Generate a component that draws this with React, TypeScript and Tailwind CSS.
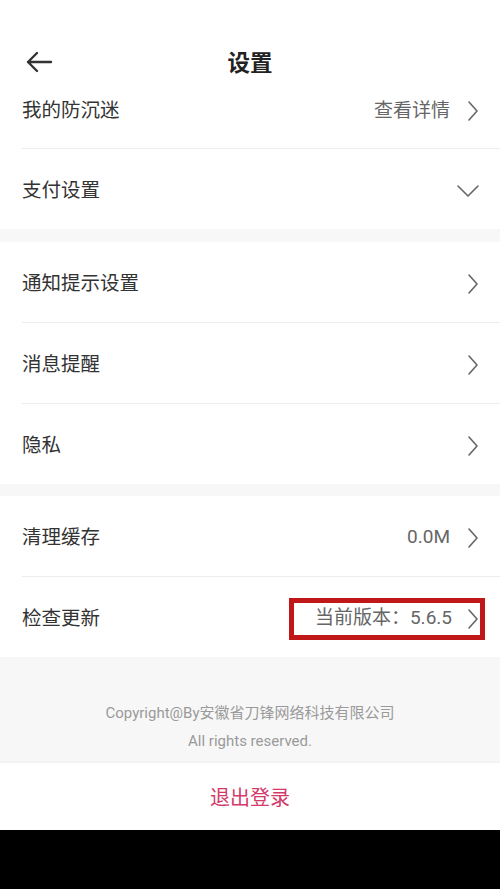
import type { ReactNode } from "react";

// Settings screen — grouped rows, copyright footer, logout bar.

const FONT = "font-['Roboto','Noto_Sans_CJK_SC',sans-serif]";

function ChevronRight() {
  return (
    <svg width="14" height="22" viewBox="0 0 14 22" fill="none" className="shrink-0">
      <path d="M3 2l8 9-8 9" stroke="#666" strokeWidth="1.6" strokeLinecap="round" strokeLinejoin="round" />
    </svg>
  );
}

function ChevronDown() {
  return (
    <svg width="24" height="14" viewBox="0 0 24 14" fill="none" className="shrink-0">
      <path d="M2 2l10 10 10-10" stroke="#666" strokeWidth="1.6" strokeLinecap="round" strokeLinejoin="round" />
    </svg>
  );
}

type RowProps = {
  label: string;
  right?: ReactNode;
  divider?: boolean;
  className?: string;
};

function Row({ label, right, divider = false, className = "h-[80px] pt-[3px]" }: RowProps) {
  return (
    <div className={`ml-[22px] flex items-center justify-between pr-[20px] ${className} ${divider ? "border-b border-[#ececec]" : ""}`}>
      <span className="text-[19.5px] text-[#333333]">{label}</span>
      {right ?? <ChevronRight />}
    </div>
  );
}

function Value({ children }: { children: ReactNode }) {
  return (
    <div className="flex items-center gap-[16px]">
      <span className="text-[19px] text-[#666666]">{children}</span>
      <ChevronRight />
    </div>
  );
}

export default function App() {
  return (
    <div className={`flex h-[889px] w-[500px] flex-col bg-[#f7f7f7] ${FONT}`}>
      {/* status bar + title */}
      <div className="bg-white">
        <div className="h-[30px]" />
        <div className="relative flex h-[58px] items-center justify-center pt-[10px]">
          <svg width="28" height="22" viewBox="0 0 28 22" fill="none" className="absolute left-[25px] top-[21px]">
            <path d="M26 11H3M12 2L3 11l9 9" stroke="#333" strokeWidth="2.4" strokeLinecap="round" strokeLinejoin="round" />
          </svg>
          <span className="text-[22.5px] font-bold text-[#222]">设置</span>
        </div>
      </div>

      <div className="bg-white">
        <Row
          label="我的防沉迷"
          divider
          className="h-[61px] pb-[14px]"
          right={<Value>查看详情</Value>}
        />
        <Row label="支付设置" className="h-[80px] pt-[3px]" right={<ChevronDown />} />
      </div>

      <div className="mt-[13px] bg-white">
        <Row label="通知提示设置" divider className="h-[81px] pt-[3px]" />
        <Row label="消息提醒" divider className="h-[81px] pt-[3px]" />
        <Row label="隐私" className="h-[80px] pt-[3px]" />
      </div>

      <div className="mt-[12px] bg-white">
        <Row label="清理缓存" divider className="h-[81px] pt-[3px]" right={<Value>0.0M</Value>} />
        <Row
          label="检查更新"
          className="h-[80px] pt-[3px]"
          right={
            <div className="mr-[-5px] flex h-[42px] w-[196px] items-center justify-end gap-[14px] border-[5px] border-[#c01818] pr-[0px]">
              <span className="text-[19px] text-[#666666]">当前版本：5.6.5</span>
              <ChevronRight />
            </div>
          }
        />
      </div>

      {/* footer */}
      <div className="flex h-[106px] flex-col items-center pt-[42px] text-[15px] leading-[28px] text-[#9a9a9a]">
        <span>Copyright@By安徽省刀锋网络科技有限公司</span>
        <span>All rights reserved.</span>
      </div>

      <div className="flex h-[67px] items-center justify-center bg-white pt-[2px] shadow-[0_-1px_2px_rgba(0,0,0,0.04)]">
        <span className="text-[20px] text-[#d23a6a]">退出登录</span>
      </div>

      <div className="flex-1 bg-black" />
    </div>
  );
}
